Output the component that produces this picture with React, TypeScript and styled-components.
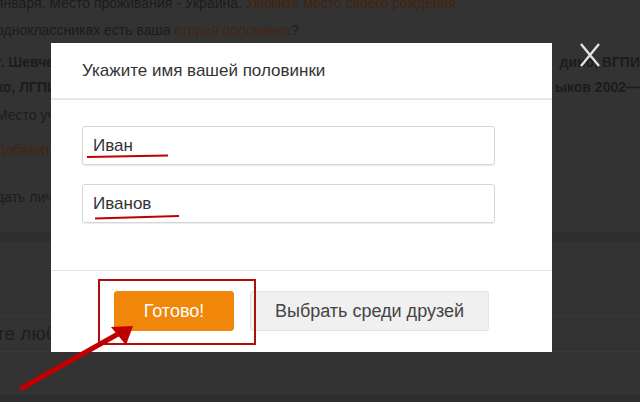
import styled, { createGlobalStyle } from "styled-components";

const GlobalStyle = createGlobalStyle`
  html, body {
    margin: 0;
    padding: 0;
    background: #333;
  }
  * {
    box-sizing: border-box;
  }
`;

const Page = styled.div`
  position: relative;
  width: 640px;
  height: 402px;
  overflow: hidden;
  background: #333333;
  font-family: "Liberation Sans", Arial, sans-serif;
`;

const Backdrop = styled.div`
  display: flex;
  flex-direction: column;
  margin-left: -4px;
`;

const Line = styled.div<{ $top: number; $bold?: boolean }>`
  display: flex;
  justify-content: space-between;
  margin-top: ${(p) => p.$top}px;
  height: 18px;
  line-height: 18px;
  font-size: 14px;
  white-space: nowrap;
  color: #1c1c1c;
  font-weight: ${(p) => (p.$bold ? 700 : 400)};
`;

const DimLink = styled.span`
  color: #44230f;
`;

const DarkBand = styled.div`
  margin-top: 26px;
  height: 10px;
  background: #2e2e2e;
`;

const SearchBand = styled.div`
  margin-top: 73px;
  height: 37px;
  border-top: 1px solid #3a3a3a;
  border-bottom: 1px solid #3a3a3a;
  display: flex;
  align-items: center;
  font-size: 19px;
  color: #1e1e1e;
`;

const BottomBand = styled.div`
  margin-top: 43px;
  height: 20px;
  background: #2e2e2e;
`;

const Modal = styled.div`
  position: absolute;
  left: 51px;
  top: 43px;
  width: 501px;
  height: 309px;
  background: #fff;
  display: flex;
  flex-direction: column;
`;

const Header = styled.div`
  height: 57px;
  border-bottom: 2px solid #e8e8e8;
  display: flex;
  align-items: center;
  padding-left: 31px;
  font-size: 17px;
  color: #333;
`;

const Body = styled.div`
  display: flex;
  flex-direction: column;
  gap: 19px;
  padding: 26px 0 0 31px;
  height: 171px;
  border-bottom: 1px solid #e4e4e4;
`;

const Field = styled.div`
  width: 413px;
  height: 39px;
  border: 1px solid #d6d6d6;
  border-radius: 3px;
  box-shadow: 0 1px 1px rgba(0, 0, 0, 0.08);
  display: flex;
  align-items: center;
  padding-left: 10px;
  font-size: 17px;
  color: #333;
`;

const Footer = styled.div`
  position: relative;
  display: flex;
  gap: 16px;
  padding: 20px 0 0 63px;
`;

const Button = styled.div<{ $primary?: boolean }>`
  height: 40px;
  display: flex;
  align-items: center;
  justify-content: center;
  border-radius: 3px;
  font-size: 18px;
  width: ${(p) => (p.$primary ? 120 : 239)}px;
  background: ${(p) => (p.$primary ? "#f0860a" : "#f0f0f0")};
  color: ${(p) => (p.$primary ? "#fff" : "#444")};
  border: 1px solid ${(p) => (p.$primary ? "#f0860a" : "#e2e2e2")};
`;

const Highlight = styled.div`
  position: absolute;
  left: 47px;
  top: 8px;
  width: 158px;
  height: 66px;
  border: 2px solid #b00d0d;
`;

const Close = styled.svg`
  position: absolute;
  left: 579px;
  top: 42px;
`;

const Marks = styled.svg`
  position: absolute;
  left: 0;
  top: 0;
  pointer-events: none;
`;

export default function App() {
  return (
    <Page>
      <GlobalStyle />
      <Backdrop>
        <Line $top={-6}>
          <span>
            января. Место проживания - Украина.{" "}
            <DimLink>Укажите место своего рождения</DimLink>
          </span>
        </Line>
        <Line $top={9}>
          <span>
            одноклассниках есть ваша <DimLink>вторая половинка</DimLink>?
          </span>
        </Line>
        <Line $top={14} $bold>
          <span>г. Шевченко</span>
          <span>дино, ВГПИ</span>
        </Line>
        <Line $top={7} $bold>
          <span>ко, ЛГПИ</span>
          <span>ыков 2002—</span>
        </Line>
        <Line $top={10}>
          <span>Место учебы</span>
        </Line>
        <Line $top={17}>
          <DimLink>Добавить</DimLink>
        </Line>
        <Line $top={29}>
          <span>дать личные</span>
        </Line>
        <DarkBand />
        <SearchBand>те любимых</SearchBand>
        <BottomBand />
      </Backdrop>

      <Modal>
        <Header>Укажите имя вашей половинки</Header>
        <Body>
          <Field>Иван</Field>
          <Field>Иванов</Field>
        </Body>
        <Footer>
          <Button $primary>Готово!</Button>
          <Button>Выбрать среди друзей</Button>
          <Highlight />
        </Footer>
      </Modal>

      <Close width="22" height="26" viewBox="0 0 22 26">
        <path d="M2 2 L20 24 M20 2 L2 24" stroke="#e2e2e2" strokeWidth="2.4" fill="none" />
      </Close>

      <Marks width="640" height="402" viewBox="0 0 640 402">
        <path d="M87 157 L168 155.5" stroke="#c00000" strokeWidth="2.2" fill="none" />
        <path d="M95 218.5 L179 216" stroke="#c00000" strokeWidth="2.2" fill="none" />
        <path d="M22 388 L118 334" stroke="#c00000" strokeWidth="5" strokeLinecap="round" fill="none" />
        <polygon points="133,326 111,327 126,345" fill="#c00000" />
      </Marks>
    </Page>
  );
}
